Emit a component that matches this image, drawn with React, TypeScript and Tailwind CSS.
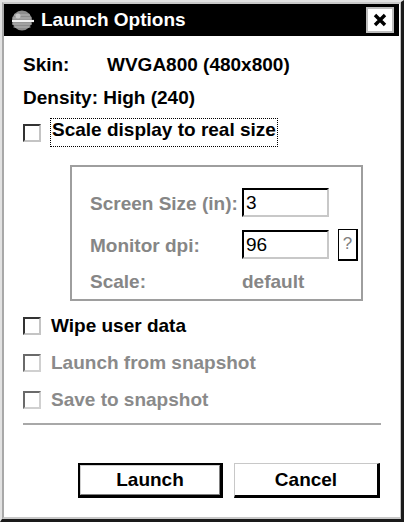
import React from 'react';

function Checkbox({ disabled }: { disabled?: boolean }) {
  return (
    <span
      className={
        'block w-[18px] h-[18px] shrink-0 bg-white border-2 ' +
        (disabled
          ? 'border-t-[#6a6a6a] border-l-[#6a6a6a] border-r-[#d0d0d0] border-b-[#d0d0d0]'
          : 'border-t-[#333] border-l-[#333] border-r-[#c4c4c4] border-b-[#c4c4c4]')
      }
    />
  );
}

function TextBox({ value }: { value: string }) {
  return (
    <div className="w-[87px] h-[29px] bg-white border-2 border-t-black border-l-black border-r-[#c8c8c8] border-b-[#c8c8c8] pl-[2px] text-[19px] leading-[25px] font-normal text-black">
      {value}
    </div>
  );
}

function CheckRow({ label, disabled, className }: { label: string; disabled?: boolean; className?: string }) {
  return (
    <div className={'flex items-center h-[26px] ' + (className ?? '')}>
      <Checkbox disabled={disabled} />
      <span className={'ml-[10px] leading-[22px] ' + (disabled ? 'text-[#8a8a8a]' : 'text-black')}>{label}</span>
    </div>
  );
}

export default function App() {
  return (
    <div className="w-[404px] h-[522px] flex flex-col font-['Liberation_Sans',Arial,sans-serif] font-bold text-[19px] border-l-2 border-t-2 border-l-[#e2e2e2] border-t-[#e2e2e2] border-r-[3px] border-b-[3px] border-r-[#1a1a1a] border-b-[#1a1a1a]">
      <div className="flex-1 flex flex-col border-l-2 border-t-2 border-l-[#a8a8a8] border-t-[#c8c8c8] border-r border-b-2 border-r-[#c0c0c0] border-b-[#c8c8c8] bg-white">
        {/* title bar */}
        <div className="h-[32px] bg-black flex items-center pl-[7px] pr-[5px] mr-[1px]">
          <svg width="23" height="21" viewBox="0 0 23 21">
            <circle cx="11" cy="10.5" r="10" fill="#8c8c8c" />
            <path d="M3 5h16M1.5 8h19M1 14h20M2.5 17h17" stroke="#b8b8b8" strokeWidth="1" />
            <path d="M1 11h22" stroke="#f2f2f2" strokeWidth="2.2" />
            <circle cx="7" cy="6" r="2.5" fill="#c8c8c8" />
          </svg>
          <span className="ml-[7px] text-white text-[19px] leading-[22px]">Launch Options</span>
          <div className="ml-auto w-[28px] h-[26px] bg-white border-2 border-[#bdbdbd] flex items-center justify-center">
            <svg width="14" height="14" viewBox="0 0 14 14">
              <path d="M2 2l10 10M12 2L2 12" stroke="black" strokeWidth="3.4" />
            </svg>
          </div>
        </div>

        {/* content */}
        <div className="flex flex-col pl-[19px] pr-[19px] pt-[18px] text-black">
          <div className="flex h-[22px] leading-[22px]">
            <span className="w-[84px]">Skin:</span>
            <span>WVGA800 (480x800)</span>
          </div>
          <div className="mt-[11px] h-[22px] leading-[22px]">Density: High (240)</div>

          <div className="mt-[9px] flex items-center h-[29px]">
            <Checkbox />
            <span className="ml-[9px] h-[29px] border border-dotted border-black px-px leading-[22px]">
              Scale display to real size
            </span>
          </div>

          <div className="mt-[18px] ml-[47px] w-[293px] h-[136px] border-2 border-[#9e9e9e] pl-[18px] pt-[20px] text-[#868686]">
            <div className="flex items-center">
              <span className="w-[152px] pt-[2px] leading-[29px]">Screen Size (in):</span>
              <TextBox value="3" />
            </div>
            <div className="flex items-center mt-[12px] h-[29px]">
              <span className="w-[152px] pt-[2px] leading-[29px]">Monitor dpi:</span>
              <TextBox value="96" />
              <div className="ml-[9px] w-[20px] h-[32px] bg-white border border-black border-r-2 border-b-2 flex items-center justify-center text-[17px] font-normal text-[#808080]">
                ?
              </div>
            </div>
            <div className="flex mt-[12px] leading-[22px]">
              <span className="w-[152px]">Scale:</span>
              <span>default</span>
            </div>
          </div>

          <CheckRow label="Wipe user data" className="mt-[12px]" />
          <CheckRow label="Launch from snapshot" disabled className="mt-[11px]" />
          <CheckRow label="Save to snapshot" disabled className="mt-[11px]" />

          <div className="mt-[10px] h-[2px] bg-[#a8a8a8]" />

          <div className="mt-[38px] flex justify-end gap-[11px] pr-px">
            <button className="w-[145px] h-[35px] border-2 border-black border-r-[3px] border-b-[3px] bg-white flex items-center justify-center">
              <span className="w-full h-full border border-[#d0d0d0] border-r-[#808080] border-b-[#808080] flex items-center justify-center leading-[22px]">
                Launch
              </span>
            </button>
            <button className="w-[146px] h-[35px] border border-t-[#c8c8c8] border-l-[#c8c8c8] border-r-[3px] border-b-[3px] border-r-black border-b-black bg-white flex items-center justify-center leading-[22px]">
              Cancel
            </button>
          </div>
        </div>
      </div>
    </div>
  );
}
